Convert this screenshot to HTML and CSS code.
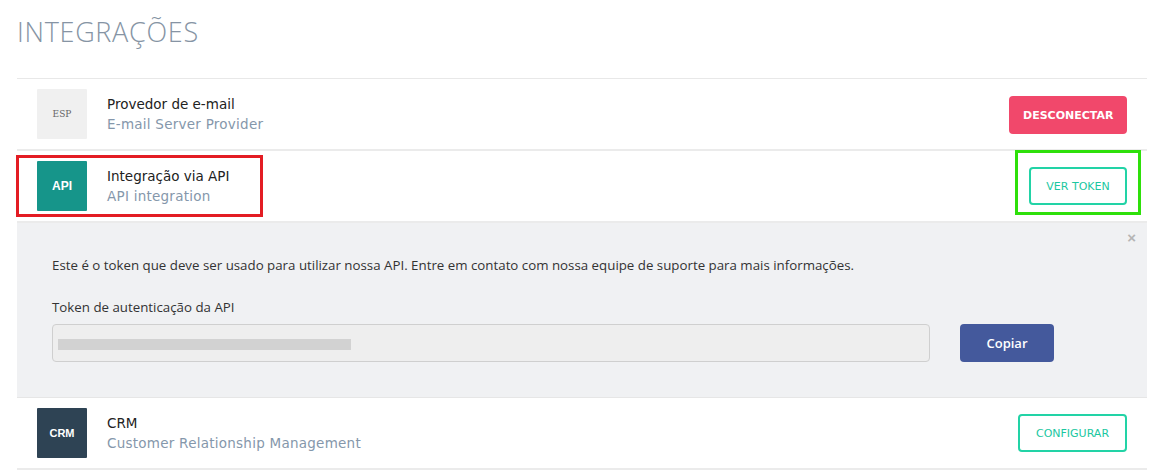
FILE: index.html
```html
<!DOCTYPE html>
<html lang="pt">
<head>
<meta charset="utf-8">
<link rel="stylesheet" href="styles.css">
</head>
<body>
<div class="page">
  <h1 class="title">INTEGRAÇÕES</h1>
  <div class="list">
    <div class="row">
      <div class="logo logo-esp">ESP</div>
      <div class="info">
        <div class="name">Provedor de e-mail</div>
        <div class="sub">E-mail Server Provider</div>
      </div>
      <button class="btn btn-danger">DESCONECTAR</button>
    </div>
    <div class="row row-api">
      <div class="logo logo-api">API</div>
      <div class="info">
        <div class="name">Integração via API</div>
        <div class="sub">API integration</div>
      </div>
      <button class="btn btn-outline">VER TOKEN</button>
      <div class="mark mark-red"></div>
      <div class="mark mark-green"></div>
    </div>
    <div class="panel">
      <span class="close">×</span>
      <p class="panel-text">Este é o token que deve ser usado para utilizar nossa API. Entre em contato com nossa equipe de suporte para mais informações.</p>
      <label class="panel-label">Token de autenticação da API</label>
      <div class="token-row">
        <div class="token-input"><span class="token-blur"></span></div>
        <button class="btn-copy">Copiar</button>
      </div>
    </div>
    <div class="row">
      <div class="logo logo-crm">CRM</div>
      <div class="info">
        <div class="name">CRM</div>
        <div class="sub">Customer Relationship Management</div>
      </div>
      <button class="btn btn-outline">CONFIGURAR</button>
    </div>
  </div>
</div>
</body>
</html>
```
FILE: styles.css
```css
* { box-sizing: border-box; }
html, body { margin: 0; padding: 0; background: #fff; }
body { font-family: "DejaVu Sans", "Liberation Sans", sans-serif; }
.page { padding: 0 6px 0 17px; }
.title {
  margin: 0;
  padding-top: 13px;
  height: 78px;
  font-family: "Open Sans", sans-serif;
  font-weight: 300;
  font-size: 27px;
  letter-spacing: 0.7px;
  color: #8694a4;
}
.list { border-top: 1px solid #e8e8e8; }
.row {
  position: relative;
  display: flex;
  align-items: center;
  height: 72px;
  padding: 0 20px;
  border-bottom: 2px solid #ebebeb;
}
.logo {
  width: 50px;
  height: 50px;
  display: flex;
  align-items: center;
  justify-content: center;
  flex-shrink: 0;
  border-radius: 1px;
}
.logo-esp { background: #f0f0f0; color: #666; font-family: "DejaVu Serif", serif; font-size: 9px; }
.logo-api { background: #16958a; color: #fff; font-family: "Liberation Sans", sans-serif; font-weight: 700; font-size: 12px; }
.logo-crm { background: #2e4354; color: #fff; font-family: "Liberation Sans", sans-serif; font-weight: 700; font-size: 11px; }
.info { margin-left: 20px; flex: 1; }
.name { font-size: 13.5px; color: #222; line-height: 20px; }
.sub { font-size: 13.5px; color: #8597ab; line-height: 20px; letter-spacing: 0.25px; }
.btn {
  height: 38px;
  border-radius: 4px;
  font-family: "DejaVu Sans", sans-serif;
  font-size: 11px;
  font-weight: 700;
  padding: 0 14px;
  cursor: pointer;
}
.btn-danger { background: #f1486b; border: none; color: #fff; width: 118px; margin-top: 2px; }
.btn-outline { background: #fff; border: 2px solid #22d3a6; color: #1bc79f; font-weight: 400; }
.row-api .btn-outline { width: 98px; padding: 0; }
.row:last-child .btn-outline { width: 109px; padding: 0; }
.mark { position: absolute; pointer-events: none; }
.mark-red { left: -1px; top: 4px; width: 247px; height: 62px; border: 3px solid #e31c23; }
.mark-green { left: 998px; top: -1px; width: 126px; height: 65px; border: 3px solid #2ee00a; }
.panel {
  position: relative;
  background: #f0f1f3;
  padding: 33px 35px 35px;
  border-bottom: 1px solid #e6e6e6;
  font-family: "Open Sans", sans-serif;
}
.close { position: absolute; right: 11px; top: 6px; color: #b5b5b5; font-size: 15px; font-weight: 700; font-family: "Liberation Sans", sans-serif; }
.panel-text { margin: 0; font-size: 13.3px; color: #333; line-height: 18px; }
.panel-label { display: block; margin-top: 24px; font-size: 13.3px; color: #333; line-height: 18px; }
.token-row { display: flex; align-items: center; margin-top: 8px; }
.token-input {
  width: 878px;
  height: 38px;
  background: #eeeeee;
  border: 1px solid #cfcfcf;
  border-radius: 4px;
  display: flex;
  align-items: center;
  padding-left: 5px;
}
.token-blur { display: block; width: 293px; height: 11px; background: #d2d2d2; margin-top: 3px; }
.btn-copy {
  margin-left: 30px;
  width: 94px;
  height: 38px;
  background: #44599c;
  color: #fff;
  border: none;
  border-radius: 4px;
  font-family: "Open Sans", sans-serif;
  font-weight: 600;
  font-size: 13px;
}
```
